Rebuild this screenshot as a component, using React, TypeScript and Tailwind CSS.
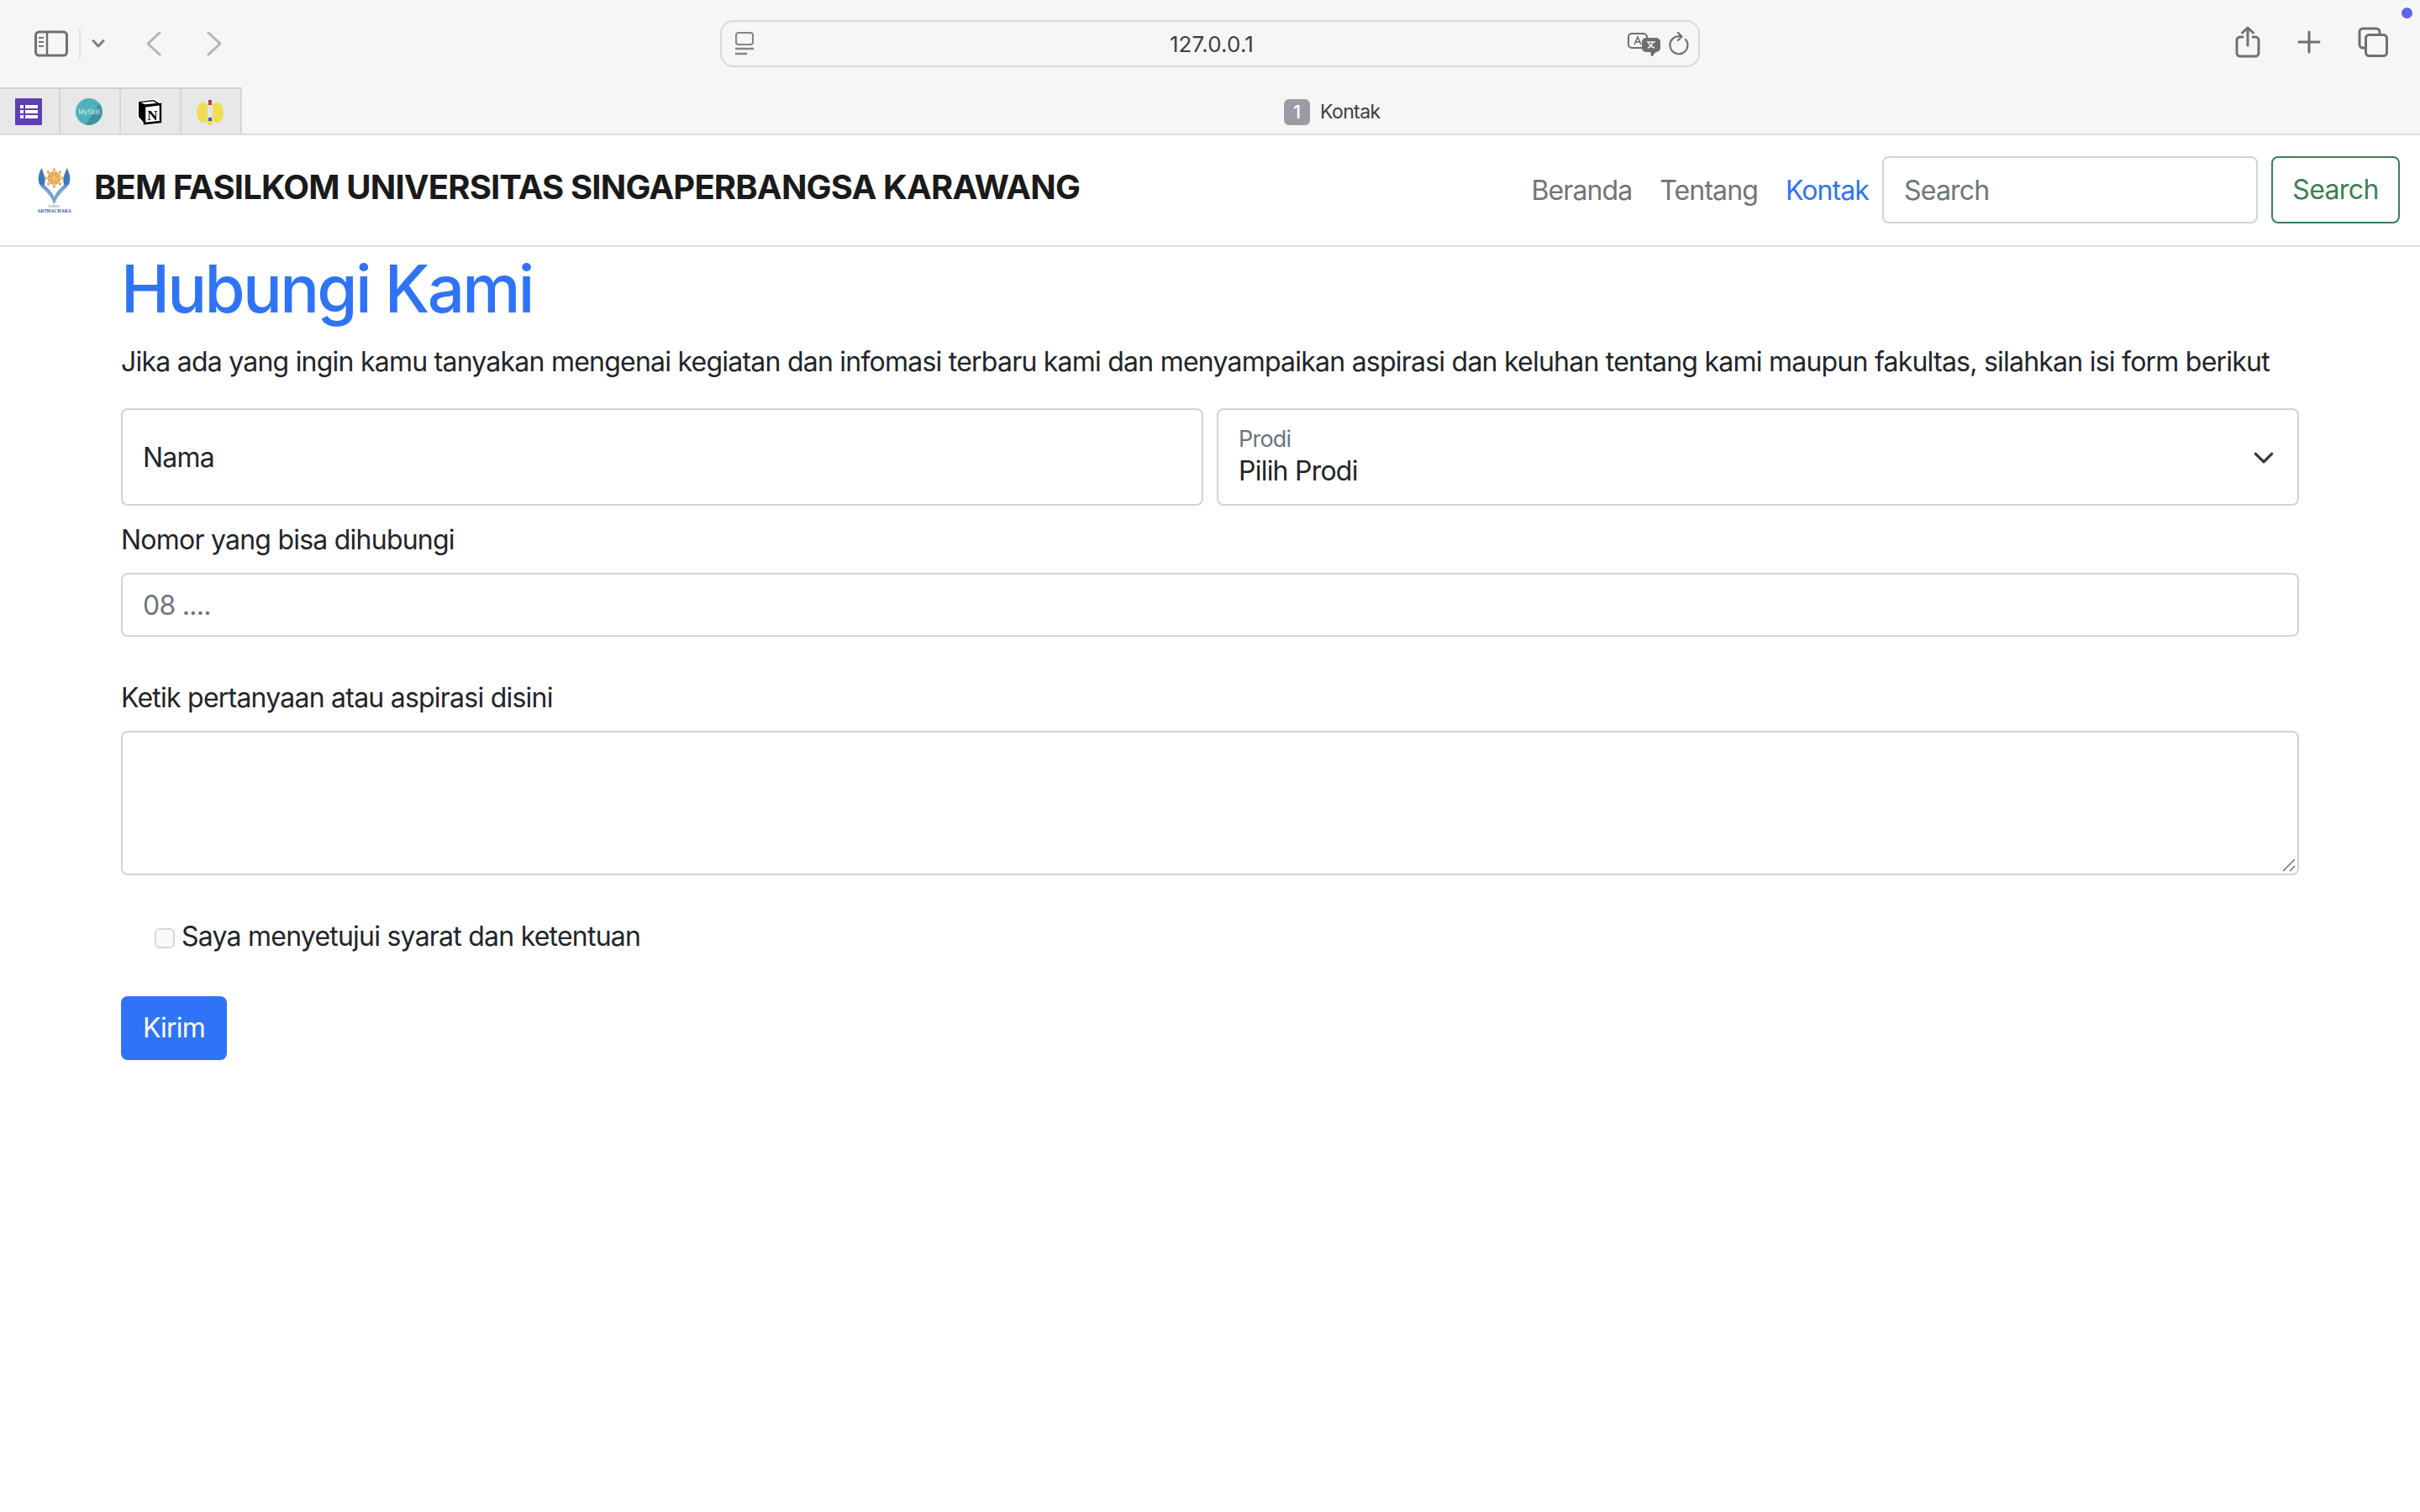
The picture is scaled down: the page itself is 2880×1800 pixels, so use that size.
const Logo = () => (
    <svg width="40" height="54" viewBox="0 0 40 54" className="shrink-0">
        <path d="M4.500 0C1 6-1 14 2.500 20c4 6 12 9 17 23v-8c-3-7-8-11-12-15 2-4 1-9 0-12Z" fill="#3d78bf" />
        <path d="M34.500 0C38 6 40 14 36.500 20c-4 6-12 9-17 23v-8c3-7 8-11 12-15-2-4-1-9 0-12Z" fill="#3d78bf" />
        <path d="M3 19c5 3 13 8 16.500 17v7c-4-11-11-16-16.500-24Z" fill="#7ba6d8" />
        <path d="M36 19c-5 3-13 8-16.500 17v7c4-11 11-16 16.500-24Z" fill="#7ba6d8" />
        <g fill="#e3ab55">
            <circle cx="19.500" cy="12" r="8" />
            <circle cx="19.500" cy="2" r="1.700" />
            <circle cx="19.500" cy="22" r="1.700" />
            <circle cx="9.500" cy="12" r="1.700" />
            <circle cx="29.500" cy="12" r="1.700" />
            <circle cx="12.500" cy="5" r="1.700" />
            <circle cx="26.500" cy="5" r="1.700" />
            <circle cx="12.500" cy="19" r="1.700" />
            <circle cx="26.500" cy="19" r="1.700" />
        </g>
        <path d="M19.500 4v16M11.500 12h16M14 6.500l11 11M25 6.500l-11 11" stroke="#f0c98c" strokeWidth="1" />
        <text x="19.500" y="47" textAnchor="middle" fontSize="3" fill="#4a6a94" fontFamily="Liberation Serif">KABINET</text>
        <text x="19.500" y="53" textAnchor="middle" fontSize="5.600" fontWeight="700" fill="#2f5a9c" fontFamily="Liberation Serif">ARTHACHARA</text>
    </svg>
);

const FaviconTab = ({ children }: { children: React.ReactNode }) => (
    <div className="flex h-full w-[72px] items-center justify-center border-r-2 border-[#d6d6d6] bg-[#e8e8e8] pr-[2px]">
        {children}
    </div>
);

const Toolbar = () => (
    <div className="flex h-[104px] items-center bg-[#f6f6f6]">
        <div className="flex w-[857px] items-center pl-[41px]">
            <svg width="40" height="32" viewBox="0 0 40 32" fill="none" stroke="#707070" strokeWidth="3">
                <rect x="1.500" y="2" width="37" height="28" rx="4" />
                <path d="M15 2v28" strokeWidth="2.500" />
                <path d="M5 9h6M5 14h6M5 19h6" strokeWidth="2" />
            </svg>
            <div className="ml-[13px] h-[36px] w-[2px] bg-[#e2e2e2]" />
            <svg className="ml-[13px]" width="16" height="12" viewBox="0 0 16 12" fill="none" stroke="#808080" strokeWidth="3" strokeLinecap="round" strokeLinejoin="round">
                <path d="M2 2.500 8 9l6-6.500" />
            </svg>
            <svg className="ml-[49px]" width="18" height="30" viewBox="0 0 18 30" fill="none" stroke="#b4b4b4" strokeWidth="3" strokeLinecap="round" strokeLinejoin="round">
                <path d="M16 2 2 15l14 13" />
            </svg>
            <svg className="ml-[54px]" width="18" height="30" viewBox="0 0 18 30" fill="none" stroke="#b4b4b4" strokeWidth="3" strokeLinecap="round" strokeLinejoin="round">
                <path d="m2 2 14 13L2 28" />
            </svg>
        </div>
        <div className="flex h-[56px] w-[1166px] items-center justify-between rounded-[16px] border-2 border-[#d9d9d9] bg-[#f6f6f6] pl-[15px] pr-[10px]">
            <svg width="24" height="28" viewBox="0 0 24 28" fill="none" stroke="#858585" strokeWidth="2">
                <rect x="2" y="1" width="20" height="14" rx="3" />
                <path d="M1 20h22" strokeWidth="2.500" />
                <path d="M1 26h14" strokeWidth="2.500" />
            </svg>
            <span className="ml-[47px] text-[26px] tracking-[0.15px] text-[#3e3e3e]">127.0.0.1</span>
            <div className="flex items-center gap-[8px]">
                <svg width="40" height="30" viewBox="0 0 40 30" fill="none" stroke="#6e6e6e" strokeWidth="2" className="-ml-[2px]">
                    <rect x="1" y="3" width="22" height="17" rx="4" />
                    <rect x="18" y="9" width="20" height="15" rx="4" fill="#6e6e6e" />
                    <path d="m28 24 1 5 4-5" fill="#6e6e6e" />
                    <path d="m8 16 4-9 4 9M9.500 13h5" strokeWidth="1.600" />
                    <path d="M23 13h10M30 13c-1 4-3 6-6 7M25 14c1 3 4 5 7 6" stroke="#f6f6f6" strokeWidth="1.500" />
                </svg>
                <svg width="26" height="28" viewBox="0 0 26 28" fill="none" stroke="#707070" strokeWidth="2.200" strokeLinecap="round" strokeLinejoin="round">
                    <path d="M21 9a10.500 10.500 0 1 1-6-3.600" />
                    <path d="M12 1l4.500 4.500L12 10" />
                </svg>
            </div>
        </div>
        <div className="relative flex h-full flex-1 items-center pl-[637px]">
            <svg width="30" height="38" viewBox="0 0 30 38" fill="none" stroke="#707070" strokeWidth="3" strokeLinecap="round" strokeLinejoin="round" className="-mt-[4px]">
                <path d="M9 13H6a4 4 0 0 0-4 4v15a4 4 0 0 0 4 4h18a4 4 0 0 0 4-4V17a4 4 0 0 0-4-4h-3" />
                <path d="M15 23V2M8.500 8 15 2l6.500 6" />
            </svg>
            <svg className="-mt-[4px] ml-[44px]" width="28" height="28" viewBox="0 0 28 28" fill="none" stroke="#707070" strokeWidth="3" strokeLinecap="round">
                <path d="M14 2v24M2 14h24" />
            </svg>
            <svg className="-mt-[4px] ml-[44px]" width="36" height="36" viewBox="0 0 36 36" fill="none" stroke="#707070" strokeWidth="3">
                <path d="M26 8V6a4 4 0 0 0-4-4H6a4 4 0 0 0-4 4v15a4 4 0 0 0 4 4h2" />
                <rect x="9.500" y="9.500" width="25" height="25" rx="4" />
            </svg>
            <div className="absolute left-[835px] top-[9px] h-[13px] w-[13px] rounded-full bg-[#5e63ea]" />
        </div>
    </div>
);

const TabBar = () => (
    <div className="flex h-[57px] border-b-2 border-[#dcdcdc] bg-[#f6f6f6]">
        <div className="flex h-full border-t-2 border-[#d0d0d0]">
            <FaviconTab>
                <svg width="32" height="32" viewBox="0 0 32 32">
                    <rect width="32" height="32" rx="1" fill="#5f3eb0" />
                    <g fill="#fff">
                        <rect x="6" y="8" width="4" height="4" />
                        <rect x="6" y="14" width="4" height="4" />
                        <rect x="6" y="20" width="4" height="4" />
                        <rect x="12" y="8" width="15" height="4" />
                        <rect x="12" y="14" width="15" height="4" />
                        <rect x="12" y="20" width="15" height="4" />
                    </g>
                </svg>
            </FaviconTab>
            <FaviconTab>
                <svg width="32" height="32" viewBox="0 0 32 32">
                    <circle cx="16" cy="16" r="16" fill="#4fb1bc" />
                    <path d="M28 6A16 16 0 0 1 12 31.500Z" fill="#3f919d" />
                    <text x="16" y="19" textAnchor="middle" fontSize="7.500" fill="#d8f0f2" fontFamily="Inter">MySkill</text>
                </svg>
            </FaviconTab>
            <FaviconTab>
                <svg width="30" height="32" viewBox="0 0 30 32">
                    <path d="M0 3 21 0l9 6v24L8 32l-8-9Z" fill="#fff" />
                    <path d="M2 4 20 2l8 5v21L9 30l-7-8Z" fill="#fff" />
                    <path d="M2 4 20 2l8 5-19 2v21l-7-8Z" fill="#000" />
                    <path d="M4.500 5 19.500 3.500l4 2.500L9.500 7.300Z" fill="#fff" />
                    <path d="M9 9.500 28 7v21L9 30Z" fill="none" stroke="#000" strokeWidth="2.500" />
                    <text x="18.500" y="26" textAnchor="middle" fontSize="17" fontWeight="700" fill="#000" fontFamily="Liberation Serif">N</text>
                </svg>
            </FaviconTab>
            <FaviconTab>
                <svg width="32" height="32" viewBox="0 0 32 32">
                    <ellipse cx="8" cy="17" rx="8" ry="12" fill="#eedd55" />
                    <ellipse cx="24" cy="17" rx="8" ry="12" fill="#eedd55" />
                    <path d="M13 26h6v6h-6Z" fill="#eedd55" />
                    <rect x="13" y="3" width="6" height="22" rx="3" fill="#e4e4e4" />
                    <rect x="14" y="2" width="4" height="6" fill="#c43a3a" />
                    <rect x="14" y="23" width="4" height="4" fill="#2c62b4" />
                </svg>
            </FaviconTab>
        </div>
        <div className="flex flex-1 items-center pl-[1240px] pt-[4px]">
            <div className="flex h-[31px] w-[31px] items-center justify-center rounded-[6px] bg-[#9a9ba5] text-[22px] font-medium text-white">1</div>
            <span className="ml-[12px] text-[23px] tracking-[-0.6px] text-[#3c3c3c]">Kontak</span>
        </div>
    </div>
);

const Navbar = () => (
    <nav className="flex h-[133px] items-center border-b-2 border-[#dee2e6] bg-white pl-[45px] pr-[24px]">
        <Logo />
        <a className="ml-[27px] -mt-[7px] text-[40px] font-bold tracking-[-0.85px] text-[#1a1a1a]">BEM FASILKOM UNIVERSITAS SINGAPERBANGSA KARAWANG</a>
        <div className="ml-auto flex items-center text-[32px] tracking-[-0.9px] text-[#737373]">
            <a>Beranda</a>
            <a className="ml-[33px]">Tentang</a>
            <a className="ml-[33px] text-[#2f73f6]">Kontak</a>
        </div>
        <input
            placeholder="Search"
            className="ml-[16px] -mt-[2px] h-[80px] w-[447px] rounded-[8px] border-2 border-[#ced4da] px-[24px] pt-[2px] text-[32px] tracking-[-0.8px] placeholder:text-[#6c757d]"
        />
        <button className="ml-[16px] -mt-[2px] h-[80px] w-[153px] rounded-[8px] border-2 border-[#3a7f55] text-[32px] tracking-[-0.6px] text-[#3a7f55]">Search</button>
    </nav>
);

const ContactForm = () => (
    <main className="bg-white px-[144px] text-[32px] leading-[48px] tracking-[-0.77px] text-[#212529]">
        <h1 className="mt-[2px] text-[78px] font-medium leading-[96px] tracking-[-2.75px] text-[#2f73f6]">Hubungi Kami</h1>
        <p className="mt-[15px] whitespace-nowrap">Jika ada yang ingin kamu tanyakan mengenai kegiatan dan infomasi terbaru kami dan menyampaikan aspirasi dan keluhan tentang kami maupun fakultas, silahkan isi form berikut</p>
        <div className="mt-[31px] flex gap-[16px]">
            <div className="flex h-[116px] flex-1 items-center rounded-[8px] border-2 border-[#ced4da] pl-[24px] pt-[1px]">Nama</div>
            <div className="relative h-[116px] flex-1 rounded-[8px] border-2 border-[#ced4da] pl-[24px]">
                <div className="mt-[11px] text-[27px] text-[#6c757d]">Prodi</div>
                <div className="-mt-[10px]">Pilih Prodi</div>
                <svg className="absolute right-[27px] top-[44px]" width="26" height="26" viewBox="0 0 16 16" fill="none" stroke="#343a40" strokeWidth="2" strokeLinecap="round" strokeLinejoin="round">
                    <path d="m2 5 6 6 6-6" />
                </svg>
            </div>
        </div>
        <label className="mt-[17px] block">Nomor yang bisa dihubungi</label>
        <input
            placeholder="08 ...."
            className="mt-[15px] block h-[76px] w-full rounded-[8px] border-2 border-[#ced4da] px-[24px] tracking-[-0.75px] placeholder:text-[#6c757d]"
        />
        <label className="mt-[49px] block">Ketik pertanyaan atau aspirasi disini</label>
        <div className="relative mt-[15px] h-[172px]">
            <textarea className="block h-full w-full resize-none rounded-[8px] border-2 border-[#ced4da]" />
            <svg className="absolute bottom-[4px] right-[4px]" width="16" height="16" viewBox="0 0 16 16" stroke="#707070" strokeWidth="1.500">
                <path d="M1 15 15 1M9 15l6-6" />
            </svg>
        </div>
        <label className="mt-[49px] flex items-center pl-[40px]">
            <span className="mt-[4px] h-[24px] w-[24px] rounded-[6px] border-2 border-[#d8d8d8] bg-[#fafafa]" />
            <span className="ml-[8px]">Saya menyetujui syarat dan ketentuan</span>
        </label>
        <button className="mt-[47px] block h-[76px] w-[126px] rounded-[8px] bg-[#2f73f6] text-white">Kirim</button>
    </main>
);

export default function App() {
    return (
        <div className="min-h-screen bg-white font-['Inter',sans-serif]">
            <Toolbar />
            <TabBar />
            <Navbar />
            <ContactForm />
        </div>
    );
}
